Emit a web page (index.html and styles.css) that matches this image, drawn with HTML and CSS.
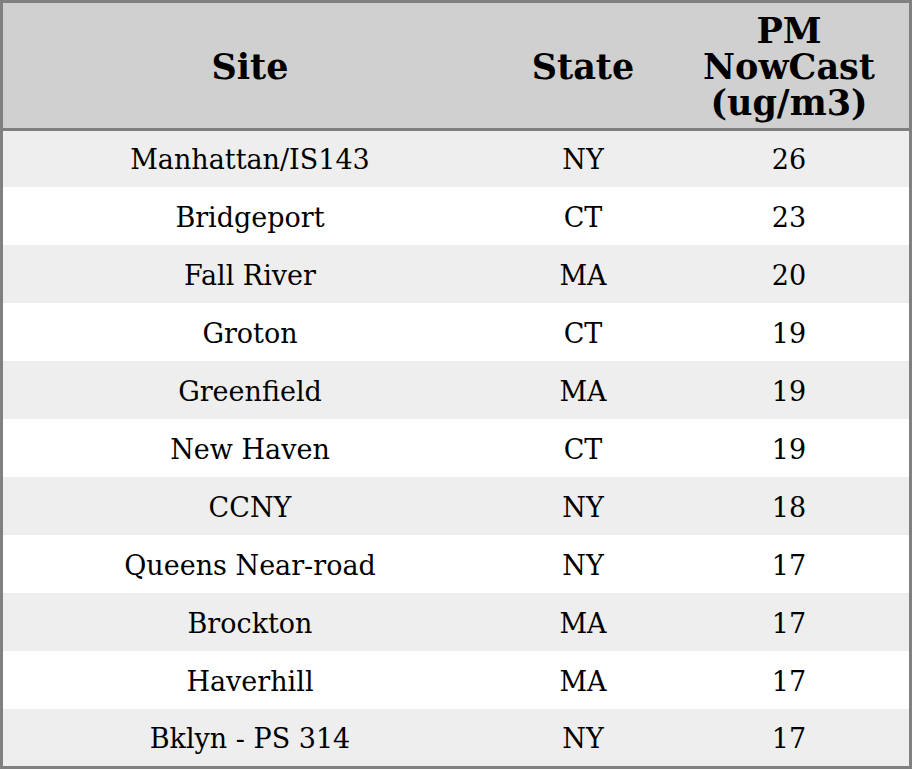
FILE: index.html
```html
<!DOCTYPE html>
<html>
<head>
<meta charset="utf-8">
<link rel="stylesheet" href="styles.css">
</head>
<body>
<table class="aq">
  <colgroup>
    <col class="c-site">
    <col class="c-state">
    <col class="c-pm">
  </colgroup>
  <thead>
    <tr><th>Site</th><th>State</th><th>PM<br>NowCast<br>(ug/m3)</th></tr>
  </thead>
  <tbody>
    <tr><td>Manhattan/IS143</td><td>NY</td><td>26</td></tr>
    <tr><td>Bridgeport</td><td>CT</td><td>23</td></tr>
    <tr><td>Fall River</td><td>MA</td><td>20</td></tr>
    <tr><td>Groton</td><td>CT</td><td>19</td></tr>
    <tr><td>Greenfield</td><td>MA</td><td>19</td></tr>
    <tr><td>New Haven</td><td>CT</td><td>19</td></tr>
    <tr><td>CCNY</td><td>NY</td><td>18</td></tr>
    <tr><td>Queens Near-road</td><td>NY</td><td>17</td></tr>
    <tr><td>Brockton</td><td>MA</td><td>17</td></tr>
    <tr><td>Haverhill</td><td>MA</td><td>17</td></tr>
    <tr><td>Bklyn - PS 314</td><td>NY</td><td>17</td></tr>
  </tbody>
</table>
</body>
</html>
```
FILE: styles.css
```css
html, body {
  margin: 0;
  padding: 0;
  background: #ffffff;
}
.aq {
  width: 912px;
  border-collapse: separate;
  border-spacing: 0;
  border: 3px solid #808080;
  table-layout: fixed;
  font-family: "DejaVu Serif", serif;
  color: #000;
}
.c-site { width: 494px; }
.c-state { width: 172px; }
.c-pm { width: 240px; }
.aq th {
  background: #d0d0d0;
  font-weight: bold;
  font-size: 35px;
  line-height: 36px;
  height: 128px;
  padding: 2px 0 0;
  box-sizing: border-box;
  text-align: center;
  vertical-align: middle;
  border-bottom: 3px solid #808080;
}
.aq td {
  font-size: 27px;
  line-height: 30px;
  height: 58px;
  padding: 4px 0 0;
  box-sizing: border-box;
  text-align: center;
  vertical-align: middle;
}
.aq tbody tr:nth-child(odd) td { background: #eeeeee; }
.aq tbody tr:nth-child(even) td { background: #ffffff; }
.aq tbody tr:first-child td { height: 56px; padding-top: 2px; }
.aq tbody tr:last-child td { height: 57px; padding-top: 3px; }
```
